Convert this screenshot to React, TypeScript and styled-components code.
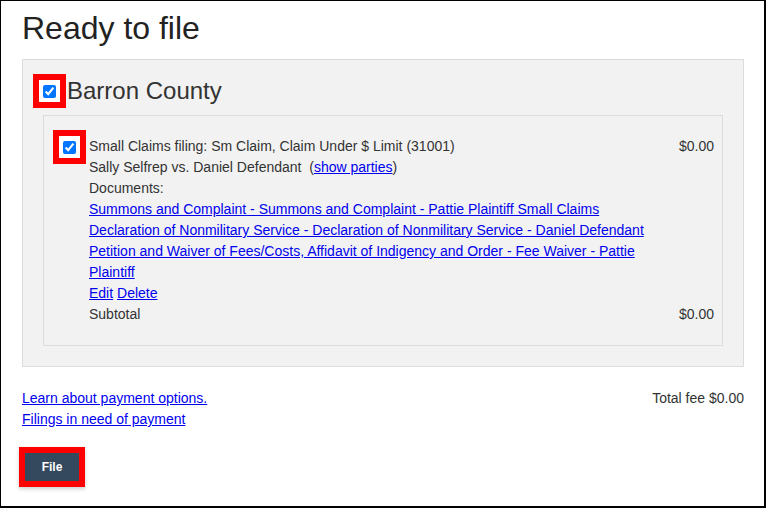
import styled, { createGlobalStyle } from "styled-components";

const GlobalStyle = createGlobalStyle`
  html, body {
    margin: 0;
    padding: 0;
    background: #fff;
  }
  body {
    font-family: "Liberation Sans", Arial, sans-serif;
    font-size: 14px;
    color: #333;
  }
`;

const documents = [
  "Summons and Complaint - Summons and Complaint - Pattie Plaintiff Small Claims",
  "Declaration of Nonmilitary Service - Declaration of Nonmilitary Service - Daniel Defendant",
  "Petition and Waiver of Fees/Costs, Affidavit of Indigency and Order - Fee Waiver - Pattie Plaintiff",
];

const App = () => {
  return (
    <Page>
      <GlobalStyle />
      <Title>Ready to file</Title>
      <CountyPanel>
        <CountyHeader>
          <Highlight>
            <Check type="checkbox" defaultChecked />
          </Highlight>
          <CountyName>Barron County</CountyName>
        </CountyHeader>
        <FilingPanel>
          <FilingRow>
            <Highlight>
              <Check type="checkbox" defaultChecked />
            </Highlight>
            <FilingBody>
              <Line>
                <span>Small Claims filing: Sm Claim, Claim Under $ Limit (31001)</span>
                <span>$0.00</span>
              </Line>
              <TextBlock>
                <div>
                  Sally Selfrep vs. Daniel Defendant&nbsp; (<Link href="#">show parties</Link>)
                </div>
                <div>Documents:</div>
                {documents.map((doc) => (
                  <div key={doc}>
                    <Link href="#">{doc}</Link>
                  </div>
                ))}
                <div>
                  <Link href="#">Edit</Link> <Link href="#">Delete</Link>
                </div>
              </TextBlock>
              <Line>
                <span>Subtotal</span>
                <span>$0.00</span>
              </Line>
            </FilingBody>
          </FilingRow>
        </FilingPanel>
      </CountyPanel>
      <Footer>
        <FooterLinks>
          <Link href="#">Learn about payment options.</Link>
          <Link href="#">Filings in need of payment</Link>
        </FooterLinks>
        <span>Total fee $0.00</span>
      </Footer>
      <ButtonHighlight>
        <FileButton>File</FileButton>
      </ButtonHighlight>
    </Page>
  );
};

export default App;

const Page = styled.div`
  width: 766px;
  height: 508px;
  box-sizing: border-box;
  border: 1px solid #000;
  border-right-width: 2px;
  border-bottom-width: 2px;
  padding: 0 20px 0 21px;
  overflow: hidden;
`;

const Title = styled.h1`
  margin: 9px 0 12px;
  font-size: 32px;
  line-height: 37px;
  font-weight: 400;
  color: #222;
`;

const CountyPanel = styled.section`
  background: #f2f2f2;
  border: 1px solid #dcdcdc;
  padding: 14px 20px 20px 10px;
`;

const CountyHeader = styled.div`
  display: flex;
  align-items: center;
  gap: 1px;
`;

const Highlight = styled.span`
  display: inline-flex;
  flex: none;
  box-sizing: border-box;
  width: 33px;
  height: 34px;
  border: 6px solid #f00;
  background: #fff;
  align-items: center;
  justify-content: center;
`;

const Check = styled.input`
  width: 13px;
  height: 13px;
  margin: 0;
  accent-color: #0075ff;
`;

const CountyName = styled.h2`
  margin: 0;
  font-size: 24px;
  font-weight: 400;
  color: #333;
`;

const FilingPanel = styled.div`
  margin: 7px 0 0 10px;
  border: 1px solid #dcdcdc;
  padding: 14px 8px 20px 9px;
`;

const FilingRow = styled.div`
  display: flex;
  align-items: flex-start;
  gap: 3px;
`;

const FilingBody = styled.div`
  flex: 1;
  margin-top: 6px;
  line-height: 21px;
`;

const Line = styled.div`
  display: flex;
  justify-content: space-between;
`;

const TextBlock = styled.div`
  max-width: 570px;
`;

const Link = styled.a`
  color: #0000ee;
  text-decoration: underline;
`;

const Footer = styled.div`
  display: flex;
  justify-content: space-between;
  align-items: flex-start;
  margin-top: 21px;
  line-height: 21px;
`;

const FooterLinks = styled.div`
  display: flex;
  flex-direction: column;
  align-items: flex-start;
`;

const ButtonHighlight = styled.div`
  display: inline-flex;
  margin: 17px 0 0 -3px;
  border: 6px solid #f00;
  box-shadow: 0 2px 4px rgba(0, 0, 0, 0.2);
`;

const FileButton = styled.button`
  width: 54px;
  height: 28px;
  border: none;
  background: #34495e;
  color: #fff;
  font-family: "Liberation Sans", Arial, sans-serif;
  font-size: 12px;
  font-weight: 700;
  cursor: pointer;
`;
